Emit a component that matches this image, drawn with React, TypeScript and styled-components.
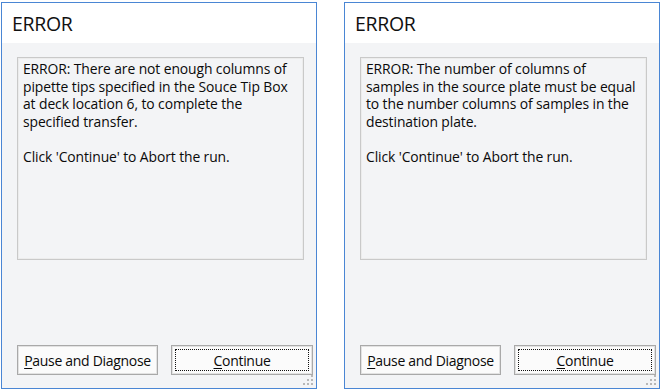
import * as React from "react";
import styled, { createGlobalStyle } from "styled-components";

const GlobalStyle = createGlobalStyle`
  html, body {
    margin: 0;
    padding: 0;
    background: #ffffff;
  }
`;

const Page = styled.div`
  display: flex;
  gap: 27px;
  padding: 2px 0 0 1px;
  font-family: "Open Sans", "Noto Sans", "Liberation Sans", sans-serif;
  color: #000;
`;

const Dialog = styled.div`
  position: relative;
  display: flex;
  flex-direction: column;
  width: 316px;
  height: 387px;
  box-sizing: border-box;
  border: 1px solid #4a86d4;
  background: #f3f4f6;
`;

const TitleBar = styled.div`
  display: flex;
  align-items: center;
  height: 40px;
  padding-left: 10px;
  background: #ffffff;
  font-size: 19.5px;
  letter-spacing: -0.3px;
  color: #111;
`;

const Body = styled.div`
  flex: 1;
  display: flex;
  flex-direction: column;
  padding: 14px 3px 13px 15px;
`;

const MessageBox = styled.div`
  width: 287px;
  height: 203px;
  box-sizing: border-box;
  border: 1px solid #c9c9c9;
  box-shadow: inset 0 0 0 1px #ececec;
  padding: 2px 5px;
  font-size: 13.9px;
  line-height: 17.6px;
  letter-spacing: -0.1px;
  white-space: pre-line;
  color: #0a0a0a;
`;

const ButtonRow = styled.div`
  margin-top: auto;
  display: flex;
  gap: 13px;
`;

const Button = styled.div<{ $width: number; $focused?: boolean }>`
  position: relative;
  display: flex;
  align-items: center;
  justify-content: center;
  width: ${p => p.$width}px;
  height: 30px;
  box-sizing: border-box;
  border: 1px solid #a9a9a9;
  box-shadow: inset 0 0 0 1px #e2e2e2;
  background: #fbfbfb;
  font-size: 14px;
  letter-spacing: -0.3px;
  color: #0a0a0a;

  &::after {
    content: "";
    display: ${p => (p.$focused ? "block" : "none")};
    position: absolute;
    inset: 3px;
    border: 1px dotted #111;
  }
`;

const Mnemonic = styled.span`
  text-decoration: underline;
  text-underline-offset: 2px;
`;

const Grip = styled.svg`
  position: absolute;
  right: 2px;
  bottom: 2px;
`;

const SizeGrip = () => (
  <Grip width="12" height="12" viewBox="0 0 12 12">
    {[
      [9, 1],
      [5, 5],
      [9, 5],
      [1, 9],
      [5, 9],
      [9, 9],
    ].map(([x, y]) => (
      <rect key={`${x}-${y}`} x={x} y={y} width="2" height="2" fill="#b7b7b7" />
    ))}
  </Grip>
);

type ErrorDialogProps = { message: string };

const ErrorDialog = ({ message }: ErrorDialogProps) => (
  <Dialog>
    <TitleBar>ERROR</TitleBar>
    <Body>
      <MessageBox>{message}</MessageBox>
      <ButtonRow>
        <Button $width={141}>
          <span>
            <Mnemonic>P</Mnemonic>ause and Diagnose
          </span>
        </Button>
        <Button $width={142} $focused>
          <span>
            <Mnemonic>C</Mnemonic>ontinue
          </span>
        </Button>
      </ButtonRow>
    </Body>
    <SizeGrip />
  </Dialog>
);

const messages = [
  "ERROR: There are not enough columns of\npipette tips specified in the Souce Tip Box\nat deck location 6, to complete the\nspecified transfer.\n\nClick 'Continue' to Abort the run.",
  "ERROR: The number of columns of\nsamples in the source plate must be equal\nto the number columns of samples in the\ndestination plate.\n\nClick 'Continue' to Abort the run.",
];

export default function App() {
  return (
    <>
      <GlobalStyle />
      <Page>
        {messages.map(m => (
          <ErrorDialog key={m} message={m} />
        ))}
      </Page>
    </>
  );
}
